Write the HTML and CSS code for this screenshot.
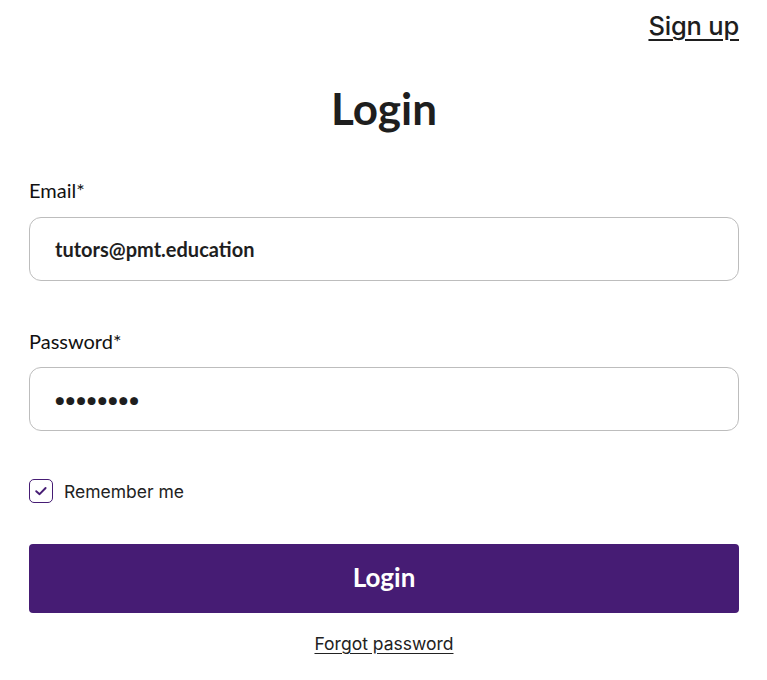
FILE: index.html
```html
<!DOCTYPE html>
<html>
<head>
<meta charset="utf-8">
<link rel="stylesheet" href="styles.css">
</head>
<body>
<div class="page">
  <div class="topbar"><a class="signup" href="#">Sign up</a></div>
  <h1 class="title">Login</h1>
  <form class="form">
    <div class="field">
      <label class="label">Email*</label>
      <div class="input">tutors@pmt.education</div>
    </div>
    <div class="field field-pw">
      <label class="label">Password*</label>
      <div class="input dots">&#9679;&#9679;&#9679;&#9679;&#9679;&#9679;&#9679;&#9679;</div>
    </div>
    <div class="remember">
      <span class="check"><svg width="18" height="18" viewBox="0 0 18 18"><path d="M4.2 9.2 L7.6 12.2 L13.6 6" fill="none" stroke="#461c74" stroke-width="1.9" stroke-linecap="round" stroke-linejoin="round"/></svg></span>
      <span class="remember-text">Remember me</span>
    </div>
    <button class="btn" type="button">Login</button>
    <div class="forgot-row"><a class="forgot" href="#">Forgot password</a></div>
  </form>
</div>
</body>
</html>
```
FILE: styles.css
```css
html, body { margin: 0; padding: 0; background: #fff; }
body { font-family: "Lato", "Liberation Sans", sans-serif; color: #1e1e1e; }
.page { padding: 0 28px 0 29px; }
.topbar { display: flex; justify-content: flex-end; padding-top: 10px; height: 36px; }
.signup { font-family: "Inter", sans-serif; font-size: 25.5px; font-weight: 500; color: #1e1e1e; text-decoration: underline; text-underline-offset: 4px; text-decoration-thickness: 2px; letter-spacing: -0.2px; line-height: 32px; }
.title { margin: 36px 0 0; text-align: center; font-size: 44px; font-weight: 700; line-height: 52px; color: #1e1e1e; }
.form { margin-top: 45px; display: flex; flex-direction: column; }
.field { display: flex; flex-direction: column; }
.field-pw { margin-top: 49px; }
.label { display: block; font-size: 20px; font-weight: 400; line-height: 22px; color: #111; }
.input { margin-top: 16px; height: 62px; border: 1px solid #bdbdbd; border-radius: 12px; padding: 0 25px; display: flex; align-items: center; font-size: 20px; font-weight: 700; color: #1e1e1e; }
.field-pw .input { margin-top: 15px; }
.dots { font-size: 16px; letter-spacing: 1px; }
.remember { display: flex; align-items: center; gap: 11px; margin-top: 48px; height: 24px; }
.check { box-sizing: border-box; flex-shrink: 0; width: 24px; height: 24px; border: 1.5px solid #461c74; border-radius: 5px; display: flex; align-items: center; justify-content: center; }
.remember-text { font-family: "Inter", sans-serif; font-size: 17.5px; color: #222; }
.btn { display: block; width: 100%; margin-top: 41px; height: 69px; padding: 0 0 4px; border: 0; border-radius: 4px; background: #461c74; color: #fff; font-family: "Lato", sans-serif; font-size: 26px; font-weight: 700; }
.forgot-row { text-align: center; margin-top: 21px; line-height: 20px; }
.forgot { font-family: "Inter", sans-serif; font-size: 17.5px; color: #222; text-decoration: underline; text-underline-offset: 3px; }
```
